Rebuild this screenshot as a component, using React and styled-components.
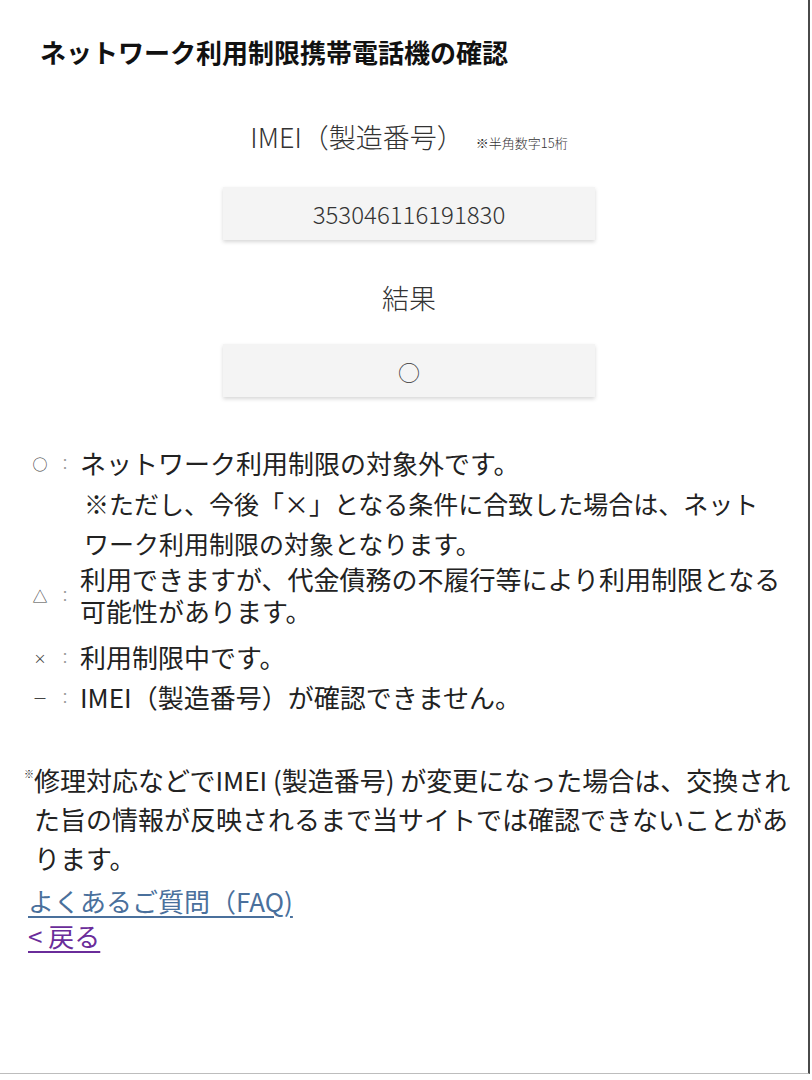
import styled, { createGlobalStyle } from 'styled-components'

const GlobalStyle = createGlobalStyle`
  body {
    margin: 0;
    background-color: white;
    font-family: "Noto Sans CJK JP", "Noto Sans", sans-serif;
    color: #222;
  }
`

const Page = styled.div`
  box-sizing: border-box;
  width: 810px;
  height: 1074px;
  border-right: 2px solid #4a4a4a;
  border-bottom: 1px solid #bdbdbd;
  background-color: white;
`

const Title = styled.h1`
  margin: 0;
  padding: 34px 0 0 40px;
  font-size: 26px;
  line-height: 36px;
  font-weight: 700;
  color: #111;
`

const Center = styled.div`
  display: flex;
  flex-direction: column;
  align-items: center;
  padding-left: 10px;
`

const Label = styled.div`
  display: flex;
  align-items: baseline;
  gap: 12px;
  margin-top: ${props => props.$top}px;
  font-size: 27px;
  line-height: 36px;
  font-weight: 300;
  color: #333;
`

const Hint = styled.span`
  font-size: 13px;
  color: #333;
`

const Field = styled.div`
  display: flex;
  justify-content: center;
  align-items: center;
  width: 372px;
  height: 53px;
  margin-top: ${props => props.$top}px;
  background-color: #f4f4f4;
  box-shadow: 0 2px 4px rgba(0, 0, 0, 0.16);
  font-size: ${props => props.$size}px;
  font-weight: 300;
  color: #333;
`

const Legend = styled.ul`
  list-style: none;
  margin: 46px 0 0 0;
  padding: 0 10px 0 30px;
`

const Row = styled.li`
  display: flex;
  align-items: center;
  padding: ${props => props.$pad || '4px 0'};
`

const Mark = styled.span`
  flex: none;
  width: 20px;
  text-align: center;
  font-size: ${props => props.$size || 15}px;
  color: #444;
`

const Colon = styled.span`
  flex: none;
  width: 30px;
  text-align: center;
  font-size: 14px;
  color: #999;
`

const RowText = styled.span`
  font-size: 26px;
  line-height: 32px;
  color: #222;
`

const SubNote = styled.li`
  padding: 0 24px 0 54px;
  font-size: 25px;
  line-height: 40px;
  line-break: strict;
  color: #222;
`

const Note = styled.p`
  margin: 43px 11px 0 0;
  padding-left: 34px;
  text-indent: -10px;
  font-size: 26px;
  line-height: 39px;
  color: #222;
  sup {
    font-size: 10px;
    vertical-align: 13px;
    line-height: 0;
  }
`

const Links = styled.div`
  display: flex;
  flex-direction: column;
  align-items: flex-start;
  margin-top: 6px;
  padding-left: 28px;
`

const TextLink = styled.a`
  font-size: 26px;
  line-height: 35px;
  text-decoration: underline;
  text-underline-offset: 4px;
  color: ${props => props.$visited ? '#6a2c9a' : '#4a709c'};
`

function App(){
  return(
    <>
      <GlobalStyle />
      <Page>
        <Title>ネットワーク利用制限携帯電話機の確認</Title>
        <Center>
          <Label $top={49}>IMEI（製造番号）<Hint>※半角数字15桁</Hint></Label>
          <Field $top={26} $size={24}>353046116191830</Field>
          <Label $top={40}>結果</Label>
          <Field $top={28} $size={22}>○</Field>
        </Center>
        <Legend>
          <Row>
            <Mark>○</Mark><Colon>：</Colon>
            <RowText>ネットワーク利用制限の対象外です。</RowText>
          </Row>
          <SubNote>※ただし、今後「×」となる条件に合致した場合は、ネットワーク利用制限の対象となります。</SubNote>
          <Row $pad="0 0 6px">
            <Mark>△</Mark><Colon>：</Colon>
            <RowText>利用できますが、代金債務の不履行等により利用制限となる可能性があります。</RowText>
          </Row>
          <Row $pad="8px 0 4px">
            <Mark $size={13}>×</Mark><Colon>：</Colon>
            <RowText>利用制限中です。</RowText>
          </Row>
          <Row>
            <Mark>－</Mark><Colon>：</Colon>
            <RowText>IMEI（製造番号）が確認できません。</RowText>
          </Row>
        </Legend>
        <Note><sup>※</sup>修理対応などでIMEI (製造番号) が変更になった場合は、交換された旨の情報が反映されるまで当サイトでは確認できないことがあります。</Note>
        <Links>
          <TextLink href="#faq">よくあるご質問（FAQ)</TextLink>
          <TextLink href="#back" $visited>&lt; 戻る</TextLink>
        </Links>
      </Page>
    </>
  )
}

export default App
